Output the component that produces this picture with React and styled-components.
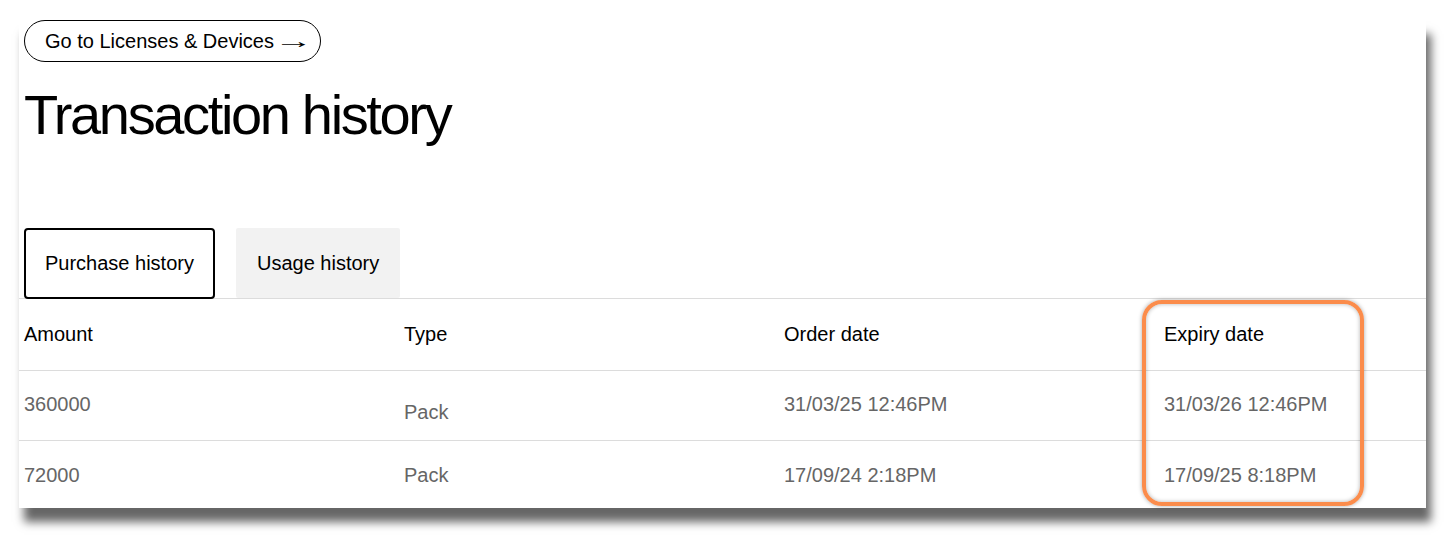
import React from "react";
import styled, { createGlobalStyle } from "styled-components";

// Page reset
const GlobalStyle = createGlobalStyle`
    body {
        margin: 0;
        background: #ffffff;
        font-family: "Liberation Sans", Arial, sans-serif;
        color: #000000;
    }
`;

// Page area (keeps the card's shadow inside the page)
const Page = styled.div`
    min-height: 545px;
    padding: 20px 0 0 19px;
    box-sizing: border-box;
`;

// Card
const Card = styled.div`
    position: relative;
    width: 1407px;
    background: #ffffff;
    box-shadow: 5px 14px 9px rgba(0, 0, 0, 0.6);
`;

// Back link button
const BackButton = styled.button`
    display: inline-flex;
    align-items: center;
    height: 42px;
    margin-left: 5px;
    padding: 0 16px 0 20px;
    border: 1px solid #000;
    border-radius: 21px;
    background: #fff;
    font-family: inherit;
    font-size: 20px;
    color: #000;
    cursor: pointer;
`;

// Long thin arrow after the label
const Arrow = styled.span`
    display: inline-block;
    width: 30px;
    text-align: left;
    font-size: 20px;
    transform: scaleX(1.95);
    transform-origin: left center;
`;

const Title = styled.h1`
    margin: 20px 0 0 5px;
    font-size: 56px;
    font-weight: 400;
    letter-spacing: -0.042em;
    line-height: normal;
`;

// Tabs
const TabBar = styled.div`
    display: flex;
    gap: 21px;
    margin-top: 81px;
    padding-left: 5px;
    border-bottom: 1px solid #dcdcdc;
`;

const Tab = styled.button`
    display: flex;
    align-items: center;
    height: ${(props) => (props.active ? "71px" : "70px")};
    padding: 0 19px;
    border: 2px solid ${(props) => (props.active ? "#000" : "transparent")};
    border-radius: ${(props) => (props.active ? "4px" : "2px")};
    background: ${(props) => (props.active ? "#fff" : "#f2f2f2")};
    font-family: inherit;
    font-size: 20px;
    color: #000;
    margin-bottom: ${(props) => (props.active ? "-1px" : "0")};
    position: relative;
    cursor: pointer;
`;

// Table
const Row = styled.div`
    display: grid;
    grid-template-columns: 380px 380px 380px 1fr;
    align-items: start;
    height: ${(props) => props.height}px;
    padding-left: 5px;
    border-bottom: ${(props) => (props.last ? "none" : "1px solid #dcdcdc")};
`;

const Cell = styled.div`
    padding-top: ${(props) => props.top}px;
    font-size: 20px;
    line-height: 23px;
    color: ${(props) => (props.head ? "#000" : "#666")};
`;

// Annotation highlight
const Highlight = styled.div`
    position: absolute;
    left: 1123px;
    top: 280px;
    width: 222px;
    height: 206px;
    box-sizing: border-box;
    border: 4px solid #fb8c4b;
    border-radius: 20px;
    box-shadow: 0 0 4px rgba(0, 0, 0, 0.35), inset 0 0 4px rgba(0, 0, 0, 0.3);
    pointer-events: none;
`;

const rows = [
    { amount: "360000", type: "Pack", order: "31/03/25 12:46PM", expiry: "31/03/26 12:46PM", height: 69, top: 22, typeTop: 30 },
    { amount: "72000", type: "Pack", order: "17/09/24 2:18PM", expiry: "17/09/25 8:18PM", height: 67, top: 23, typeTop: 23 },
];

const App = () => {
    return (
        <Page>
            <GlobalStyle />
            <Card>
                <BackButton>
                    Go to Licenses &amp; Devices
                    <Arrow>→</Arrow>
                </BackButton>
                <Title>Transaction history</Title>

                <TabBar>
                    <Tab active>Purchase history</Tab>
                    <Tab>Usage history</Tab>
                </TabBar>

                <Row height={71}>
                    <Cell head top={24}>Amount</Cell>
                    <Cell head top={24}>Type</Cell>
                    <Cell head top={24}>Order date</Cell>
                    <Cell head top={24}>Expiry date</Cell>
                </Row>

                {rows.map((item, i) => (
                    <Row key={i} height={item.height} last={i === rows.length - 1}>
                        <Cell top={item.top}>{item.amount}</Cell>
                        <Cell top={item.typeTop}>{item.type}</Cell>
                        <Cell top={item.top}>{item.order}</Cell>
                        <Cell top={item.top}>{item.expiry}</Cell>
                    </Row>
                ))}

                <Highlight />
            </Card>
        </Page>
    );
};

export default App;
